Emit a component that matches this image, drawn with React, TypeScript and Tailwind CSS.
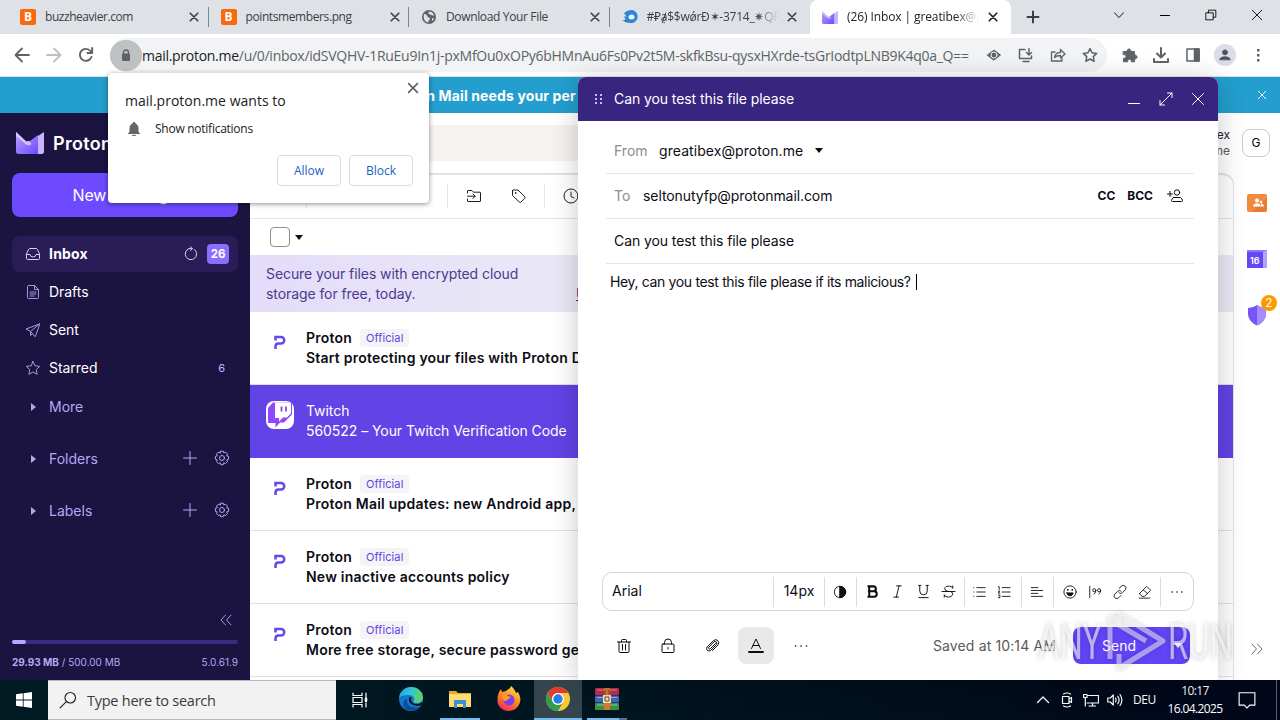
import React from 'react'
import clsx from 'clsx'

interface IconProps {
    children: React.ReactNode
    size?: number
    width?: number
    className?: string
}

// 16x16 outline icon
function Icon({ children, size = 16, width = 1, className }: IconProps) {
    return (
        <svg width={size} height={size} viewBox="0 0 16 16" fill="none" stroke="currentColor" strokeWidth={width} strokeLinecap="round" strokeLinejoin="round" className={clsx('shrink-0', className)}>
            {children}
        </svg>
    )
}

const Cross = ({ size = 16, width = 1 }: { size?: number, width?: number }) => (
    <Icon size={size} width={width}><path d="M3 3l10 10M13 3L3 13" /></Icon>
)

const Gear = () => (
    <Icon>
        <circle cx="8" cy="8" r="2.5" />
        <path d="M6.7 1.200h2.600l.5 1.700 1.700-.8 2 2-.8 1.700 1.900.5v3l-1.900.6.8 1.700-2 2-1.700-.8-.6 1.900H6.700l-.5-1.900-1.700.8-2-2 .8-1.700-1.900-.6v-3l1.900-.5-.8-1.700 2-2 1.700.8z" />
    </Icon>
)

const ProtonMail = ({ width, height }: { width: number, height: number }) => (
    <svg width={width} height={height} viewBox="0 0 28 22" preserveAspectRatio="none" className="shrink-0">
        <defs>
            <linearGradient id="pm" x1="0" y1="0" x2="1" y2="1">
                <stop offset="0" stopColor="#b9a2ff" />
                <stop offset="1" stopColor="#6d4aff" />
            </linearGradient>
        </defs>
        <path d="M0 0l10 9q2 1.700 4 0l8-6v19H2.500Q0 22 0 19.500z" fill="url(#pm)" />
        <path d="M22 4l6-4v19.500Q28 22 25.500 22H22z" fill="#c8b4ff" />
        <path d="M0 0l9 8.500q2 1.700 4 0l2.500 3.500q-3 2.500-6 0L0 4z" fill="#e0d3ff" opacity=".8" />
    </svg>
)

const Blogger = () => (
    <div className="w-4 h-4 shrink-0 rounded-[2px] bg-[#fa6a0a] text-white text-[12px] leading-4 font-bold text-center">B</div>
)

const Globe = () => (
    <svg width="16" height="16" viewBox="0 0 16 16" className="shrink-0">
        <circle cx="8" cy="8" r="7" fill="#5f6368" />
        <path d="M3 5c2 0 3 1 3.500 2.500S9 8 9 9.500 7 11 7.500 13.500C4 13 2 10 3 5zM8 2.500c2 0 4 1 5 3.500-1 1-2 .5-2.500 0S8 5.500 7.500 4.500zM11 9.500l2-.5c-.3 1.500-1 2.500-2 3z" fill="#dee1e6" />
    </svg>
)

const Swirl = () => (
    <svg width="17" height="14" viewBox="0 0 17 14" className="shrink-0">
        <path d="M0 10.500c2 0 4-.5 5.500-2.500L8 11q-1 2-3 1.500z" fill="#1d6fc4" />
        <path d="M2 3.500C4 .5 7 0 9.500 0A6.500 6.500 0 1 1 4 10.500L2 6.500h2.500q-1-1.500-2.500-3z" fill="#2f86d8" />
        <ellipse cx="9.500" cy="7" rx="3" ry="2.500" fill="#eef2f8" />
    </svg>
)

const tabs = [
    { icon: <Blogger />, title: 'buzzheavier.com', track: 'tracking-[-0.450px]' },
    { icon: <Blogger />, title: 'pointsmembers.png', track: 'tracking-[-0.400px]' },
    { icon: <Globe />, title: 'Download Your File', track: 'tracking-[-0.350px]' },
    { icon: <Swirl />, title: '#₽ạ̸$$wǿrĐ✶-3714_✷QP', track: 'tracking-[-0.250px]' },
    { icon: <ProtonMail width={16} height={13} />, title: '(26) Inbox | greatibex@proton.me', track: 'tracking-[-0.100px]' },
]

function TabStrip() {
    return (
        <div className="flex h-[34px] shrink-0 bg-[#dee1e6] pl-2 text-[12px] text-[#3c4043]">
            {tabs.map((tab, index) => {
                const active = index === 4
                return (
                    <div key={index} className={clsx('flex items-center h-[34px] shrink-0 pl-3 pr-2', active ? 'w-[201px] bg-white rounded-t-lg text-[#202124]' : 'w-[200.500px]')}>
                        <div className="flex w-[25px] shrink-0">{tab.icon}</div>
                        <div className={clsx('w-[132px] overflow-hidden whitespace-nowrap', tab.track, index > 2 && '[mask-image:linear-gradient(to_right,#000_82%,transparent)]')}>{tab.title}</div>
                        <div className="flex flex-1 justify-center pl-1"><Cross size={12} width={2.200} /></div>
                        {index < 3 && <div className="w-px h-5 -mr-2 bg-[#80868b]" />}
                    </div>
                )
            })}
            <div className="flex items-center pl-[14px]">
                <Icon width={2}><path d="M8 2.500v11M2.500 8h11" /></Icon>
            </div>
            <div className="ml-auto mr-px flex h-[30px] items-center text-black">
                <div className="w-[46px] flex justify-center"><Icon size={14}><path d="M3 5.500l5 5.500 5-5.500" /></Icon></div>
                <div className="w-[46px] flex justify-center"><div className="w-[10px] h-px bg-black" /></div>
                <div className="w-[46px] flex justify-center"><Icon size={14} className="[stroke-linejoin:miter]"><path d="M2.500 5.500h8v8h-8zM5 5.500v-3h8.500v8h-3" /></Icon></div>
                <div className="w-[45px] flex justify-center"><Icon size={14}><path d="M2.500 2.500l11 11M13.500 2.500l-11 11" /></Icon></div>
            </div>
        </div>
    )
}

function AddressBar() {
    return (
        <div className="flex items-center h-[43px] shrink-0 bg-white border-b border-[#dfe1e5] text-[#5f6368]">
            <div className="flex w-[110px] shrink-0">
                <div className="w-11 flex justify-center"><Icon width={1.800}><path d="M15 8H1.500M8 1.500L1.500 8 8 14.500" /></Icon></div>
                <div className="w-5 flex justify-center text-[#bdc1c6]"><Icon width={1.800}><path d="M1 8h13.500M8 1.500L14.500 8 8 14.500" /></Icon></div>
                <div className="w-11 flex justify-center"><Icon width={1.900}><path d="M13.500 10A6 6 0 1 1 12.500 4L14 6M14.200 1v5H9.500" /></Icon></div>
            </div>
            <div className="flex items-center w-[997px] h-[34px] rounded-full bg-[#f1f3f4]">
                <div className="flex items-center justify-center w-8 h-[31px] rounded-full bg-[#bdc1c1] shrink-0">
                    <svg width="10" height="13" viewBox="0 0 10 13"><path d="M2.500 5V3.500a2.500 2.500 0 0 1 5 0V5" fill="none" stroke="#5f6368" strokeWidth="1.300" /><rect x="1" y="4.500" width="8" height="7.500" rx="1" fill="#5f6368" /></svg>
                </div>
                <div className="w-[844px] shrink-0 whitespace-nowrap text-[14px] tracking-[-0.280px]"><span className="text-[#202124]">mail.proton.me</span>/u/0/inbox/idSVQHV-1RuEu9In1j-pxMfOu0xOPy6bHMnAu6Fs0Pv2t5M-skfkBsu-qysxHXrde-tsGrIodtpLNB9K4q0a_Q==</div>
                <div className="flex gap-4 shrink-0">
                    <Icon><path d="M1.500 8L8 3l6.500 5L8 13z" fill="currentColor" /><circle cx="8" cy="8" r="3" stroke="#f1f3f4" /></Icon>
                    <Icon width={1.500}><path d="M7 2.500H1.500v9h12V9M5 14.500h6M11 1.500v6M8.500 5.500L11 8l2.500-2.500" /></Icon>
                    <Icon width={1.300}><path d="M5 5H1.500v9H12v-3M4.500 10.500c.5-4 3-5 6-5V2.500L15 7l-4.500 4V8.500c-3 0-4.500.5-6 2z" /></Icon>
                    <Icon width={1.500}><path d="M8 1.500l2 4.300 4.700.6-3.400 3.200.8 4.700L8 12l-4.100 2.300.8-4.700L1.300 6.400 6 5.800z" /></Icon>
                </div>
            </div>
            <div className="flex items-center w-[173px] justify-between pl-[15px] pr-[14px]">
                <Icon><path d="M1.500 4.500h3.700a1.900 1.900 0 1 1 3.600 0h3.700v3.700a1.900 1.900 0 1 1 0 3.600v3H9.300a1.900 1.900 0 1 0-3.600 0H1.500v-3.600a1.900 1.900 0 1 0 0-3.600z" fill="currentColor" /></Icon>
                <Icon width={2} className="ml-px"><path d="M8 1v9M4 6.500L8 10.500l4-4M1 12v3h14v-3" /></Icon>
                <Icon width={1.500} className="ml-[2px]"><path d="M2 2h12v12H2z" /><path d="M9.500 2H14v12H9.500z" fill="currentColor" /></Icon>
                <div className="flex items-center justify-center w-[22px] h-[22px] rounded-full bg-[#dadce6] text-[#4a4f63]"><Icon size={14}><circle cx="8" cy="5" r="2.800" fill="currentColor" /><path d="M2 13c0-4 12-4 12 0z" fill="currentColor" /></Icon></div>
                <Icon width={0}><g fill="currentColor"><rect x="7" y="2" width="2.500" height="2.500" /><rect x="7" y="7" width="2.500" height="2.500" /><rect x="7" y="12" width="2.500" height="2.500" /></g></Icon>
            </div>
        </div>
    )
}

function PermissionPopup() {
    return (
        <div className="absolute left-[108px] top-[73px] w-[321px] h-[130px] z-30 flex flex-col rounded bg-white shadow-[0_1px_5px_rgba(0,0,0,0.45)] text-[#202124]">
            <div className="flex justify-between pl-[17px] pr-[9px] pt-[8px] h-[43px]">
                <div className="pt-[10px] text-[14px] leading-5 tracking-[0.020px] whitespace-nowrap">mail.proton.me wants to</div>
                <div className="text-[#5f6368]"><Cross size={14} width={1.900} /></div>
            </div>
            <div className="flex items-center h-[26px] pl-[18px] text-[12px]">
                <Icon size={16} className="text-[#666]"><path d="M8 1.500c.9 0 1.200.7 1.200 1.300C11 3.500 12 5 12 7v4l1.700 1.500H2.300L4 11V7c0-2 1-3.500 2.800-4.200C6.800 2.200 7.100 1.500 8 1.500zM6.500 14.400h3" fill="currentColor" /></Icon>
                <div className="ml-[13px] tracking-[-0.260px] whitespace-nowrap">Show notifications</div>
            </div>
            <div className="flex justify-end gap-2 pr-[16px] pt-[13px] text-[12px] text-[#1a63c4]">
                <div className="w-16 h-[31px] flex items-center justify-center rounded border border-[#dadce0]">Allow</div>
                <div className="w-16 h-[31px] flex items-center justify-center rounded border border-[#dadce0]">Block</div>
            </div>
        </div>
    )
}

const folders = [
    { name: 'Inbox', icon: <Icon><path d="M1.500 8l2-4.500q.5-1 1.500-1h6q1 0 1.500 1l2 4.500v4.500q0 1-1 1h-11q-1 0-1-1zM1.500 8.500H5q0 2.500 3 2.500t3-2.500h3.500" /></Icon> },
    { name: 'Drafts', icon: <Icon><path d="M3.500 1.500h6l4 4v8q0 1-1 1h-9q-1 0-1-1v-11q0-1 1-1zM9.500 1.500v4h4M5 8h6M5 10h6M5 12h4" /></Icon> },
    { name: 'Sent', icon: <Icon><path d="M14.500 2L1 7l4.500 2.500L10 14.500zM14.500 2l-9 7.500v4l2-1.800" /></Icon> },
    { name: 'Starred', icon: <Icon><path d="M8 1.500l2 4.300 4.700.6-3.400 3.200.8 4.700L8 12l-4.100 2.300.8-4.700L1.300 6.400 6 5.800z" /></Icon> },
]

function Sidebar() {
    return (
        <div className="w-[250px] shrink-0 flex flex-col bg-[#1b1340] text-[14px] text-white px-3">
            <div className="flex items-center h-[60px] pl-1">
                <ProtonMail width={28} height={22} />
                <span className="ml-[9px] text-[18px] font-semibold tracking-[0.300px] whitespace-nowrap">Proton Mail</span>
            </div>
            <div className="flex items-center justify-center h-11 rounded-lg bg-[#6d4aff] text-[16px] tracking-[-0.200px]">New message</div>
            <div className="flex flex-col gap-[2px] mt-[19px]">
                {folders.map((folder, index) => (
                    <div key={index} className={clsx('flex items-center h-9 rounded-lg pl-[13px] pr-[9px]', index === 0 && 'bg-[#2a1d57] font-bold')}>
                        <span className={clsx('mr-2', index === 0 ? 'text-[#d9ccff]' : 'text-[#a898e0]')}>{folder.icon}</span>
                        <span className={clsx('pb-[2px]', index === 0 ? 'tracking-[0.200px]' : 'tracking-[-0.050px]')}>{folder.name}</span>
                        {index === 0 && (
                            <div className="ml-auto flex items-center gap-2">
                                <Icon className="text-[#d9ccff]"><path d="M11.500 3.500A5.700 5.700 0 1 1 6 2.600M6 2.600h3M7.500.8l2 1.800-2 2" /></Icon>
                                <div className="w-[22px] h-5 rounded bg-[#8a6eff] text-[11.500px] leading-5 text-center">26</div>
                            </div>
                        )}
                        {index === 3 && <span className="ml-auto mr-[4px] text-[11px] text-[#c4b5fd]">6</span>}
                    </div>
                ))}
            </div>
            {['More', 'Folders', 'Labels'].map((name, index) => (
                <div key={name} className={clsx('flex items-center h-9 pl-[19px] pr-2 text-[#b8a6f3]', index === 0 ? 'mt-[3px]' : 'mt-4')}>
                    <svg width="5" height="8" viewBox="0 0 5 8"><path d="M0 0l5 4-5 4z" fill="#b8a6f3" /></svg>
                    <span className="ml-[13px] pb-[2px]">{name}</span>
                    {index > 0 && (
                        <div className="ml-auto mb-[2px] flex gap-4">
                            <Icon><path d="M8 1.500v13M1.500 8h13" /></Icon>
                            <Gear />
                        </div>
                    )}
                </div>
            ))}
            <div className="mt-auto flex justify-end pr-1 text-[#a898e0]">
                <Icon><path d="M7.500 3L3 8l4.500 5M13 3L8.500 8l4.500 5" /></Icon>
            </div>
            <div className="mt-[12px] h-1 rounded-full bg-[#3c2a80]"><div className="w-[14px] h-1 rounded-full bg-[#b9a5ff]" /></div>
            <div className="flex justify-between items-center h-9 pt-px text-[10px] text-[#b8a6f3] whitespace-nowrap">
                <span><b>29.93 MB</b> / 500.00 MB</span>
                <span>5.0.61.9</span>
            </div>
        </div>
    )
}

const mails = [
    { from: 'Proton', subject: 'Start protecting your files with Proton Drive' },
    { from: 'Twitch', subject: '560522 – Your Twitch Verification Code' },
    { from: 'Proton', subject: 'Proton Mail updates: new Android app, and more' },
    { from: 'Proton', subject: 'New inactive accounts policy' },
    { from: 'Proton', subject: 'More free storage, secure password generator' },
]

const ProtonP = () => (
    <svg width="12" height="15" viewBox="0 0 12 15" className="mt-[1px]">
        <path d="M1.500 5.500V2H7a3.200 3.200 0 0 1 0 6.500H4.500q-3 0-3 3V14" fill="none" stroke="#6746ee" strokeWidth="2.500" />
    </svg>
)

const TwitchLogo = () => (
    <svg width="28" height="28" viewBox="0 0 28 28" className="shrink-0">
        <rect width="28" height="28" rx="8" fill="#fff" />
        <path d="M7 1.500h19v12l-8 8h-4l-4.500 5v-4.500H2V7z" fill="#9146ff" />
        <path d="M9 1.500h16v11l-4 4h-4l-4 4V17H9z" fill="#fff" />
        <path d="M15.500 5.500v5M20 5.500v5" stroke="#7b42e0" strokeWidth="1.700" />
    </svg>
)

function MailList() {
    return (
        <div className="flex-1 min-w-0 flex flex-col bg-white">
            <div className="flex h-[60px] shrink-0 items-center pl-3">
                <div className="w-[640px] h-9 rounded-lg bg-[#f5f2ef]" />
                <div className="ml-auto pr-1 text-right text-[12px] leading-4 text-[#202124]">
                    <div>greatibex</div>
                    <div className="text-[#5c5958]">greatibex@proton.me</div>
                </div>
            </div>
            <div className="flex-1 min-h-0 flex flex-col overflow-hidden border-t-2 border-r border-[#e2e1e5] rounded-tr-xl">
                <div className="flex items-center h-[44px] shrink-0 border-b border-[#e5e4e8] text-[#1c1b24] pl-[56px] pb-px">
                    <div className="w-px h-6 bg-[#e5e4e8]" />
                    <div className="w-px h-6 ml-[140px] bg-[#e5e4e8]" />
                    <Icon className="ml-[18px]"><path d="M1.500 5V3q0-.5.500-.5h4L7.500 4.200H14q.5 0 .5.500V13q0 .5-.5.500H2q-.5 0-.5-.500v-2M1.500 8.200H9M7 6l2.200 2.200L7 10.500" /></Icon>
                    <Icon className="ml-[29px]"><path d="M1.500 2.500v5L8.500 14.200q.7.600 1.400 0l4-4q.6-.7 0-1.400L7 2H2q-.5 0-.5.500z" /><circle cx="4.500" cy="5" r=".4" /></Icon>
                    <div className="w-px h-6 ml-[17px] bg-[#e5e4e8]" />
                    <Icon className="ml-[18px]"><circle cx="8" cy="8" r="7" /><path d="M8 4v4.500l3 1.500" /></Icon>
                </div>
                <div className="flex items-center h-9 shrink-0 pl-[20px]">
                    <div className="w-5 h-5 rounded border border-[#8f8d8a]" />
                    <svg width="8" height="5" viewBox="0 0 8 5" className="ml-[5px]"><path d="M0 0h8L4 5z" fill="#0c0c14" /></svg>
                </div>
                <div className="flex items-center h-[57px] shrink-0 bg-linear-to-r from-[#e4dcf9] to-[#eae9f6] to-[330px] pl-4 text-[14px] leading-5 text-[#4b3a8f]">
                    <div className="w-[272px] tracking-[-0.080px]">Secure your files with encrypted cloud storage for free, today.</div>
                    <div className="ml-[38px] mt-5 underline text-[#372580]">Upgrade</div>
                </div>
                {mails.map((mail, index) => {
                    const selected = index === 1
                    return (
                        <div key={index} className={clsx('flex h-[73px] shrink-0 border-b pl-4 text-[14px] leading-5', selected ? 'bg-[#6243e6] border-[#6243e6] text-white tracking-[-0.060px]' : 'border-[#e0e0e4] text-[#0c0c14] font-semibold tracking-[0.220px]')}>
                            <div className="flex justify-center w-7 mr-3 pt-[16px]">
                                {selected ? <TwitchLogo /> : <div className="pt-[6px]"><ProtonP /></div>}
                            </div>
                            <div className="pt-4 whitespace-nowrap">
                                <div className="flex items-center">
                                    {mail.from}
                                    {!selected && <span className="ml-[8px] px-[6px] h-[18px] leading-[18px] rounded bg-[#f4f3f5] text-[11px] font-normal text-[#6243e6] tracking-[0.100px]">Official</span>}
                                </div>
                                <div>{mail.subject}</div>
                            </div>
                        </div>
                    )
                })}
            </div>
        </div>
    )
}

function RightRail() {
    return (
        <div className="w-[46px] shrink-0 flex flex-col items-center bg-white">
            <div className="mt-4 mr-[2px] w-7 h-7 rounded-lg border border-[#c9c8cc] text-[12px] leading-[26px] text-center text-black">G</div>
            <svg width="20" height="18" viewBox="0 0 20 18" className="mt-[37px]">
                <rect width="20" height="18" rx="2" fill="#f08a3c" />
                <path d="M20 4v12a2 2 0 0 1-2 2H5z" fill="#e96d2d" opacity=".6" />
                <g fill="#fff"><circle cx="10" cy="6.500" r="2" /><path d="M6 12.500c0-4.500 8-4.500 8 0z" /><circle cx="14" cy="8" r="1.300" /><path d="M14 12.500h3c0-2-1.500-3-3-3z" /></g>
            </svg>
            <div className="mt-[38px] w-5 h-[18px] flex items-end bg-[#6548f5] border-t-2 border-r-4 border-[#b8a0ff] border-t-[#8f74ff] text-white text-[9px] leading-[14px] font-semibold pl-[3px]">16</div>
            <div className="relative mt-[36px]">
                <svg width="20" height="22" viewBox="0 0 20 22">
                    <path d="M10 1q4 3 9 3v7q-1 7-9 10.500Q2 18 1 11V4q5 0 9-3z" fill="#7556f5" />
                    <path d="M10 1q4 3 9 3v7q-1 7-9 10.500z" fill="#a58bff" />
                </svg>
                <div className="absolute -top-[9px] left-[14px] w-4 h-4 rounded-full bg-[#ff9900] text-white text-[12px] leading-4 text-center">2</div>
            </div>
            <div className="mt-auto mb-[23px] text-[#706d6b]"><Icon><path d="M3 3l4.500 5L3 13M8.500 3L13 8l-4.500 5" /></Icon></div>
        </div>
    )
}

const Divider = () => <div className="w-px h-[30px] shrink-0 bg-[#dcdbe0]" />
const Cell = ({ children }: { children: React.ReactNode }) => <div className="flex-1 flex justify-center">{children}</div>

function FormatBar() {
    return (
        <div className="mx-6 flex items-center h-[39px] shrink-0 rounded-[10px] border border-[#d6d5da]">
            <div className="w-[170px] pl-[9px] pb-[2px]">Arial</div>
            <Divider />
            <div className="w-[50px] text-center pb-[2px]">14px</div>
            <Divider />
            <div className="w-[31px] flex justify-center pr-px"><Icon size={14}><circle cx="8" cy="8" r="6.500" /><path d="M8 1.500a6.500 6.500 0 0 1 0 13z" fill="currentColor" /></Icon></div>
            <Divider />
            <div className="w-[107px] flex px-[3px]">
                <Cell><Icon width={2.200} size={15}><path d="M3.500 2.500H9a2.600 2.600 0 0 1 0 5.300H4M4 7.800h5.700a2.800 2.800 0 0 1 0 5.700H3.500M4.500 2.500v11" /></Icon></Cell>
                <Cell><Icon size={15}><path d="M7 2h5M4 14h5M9.700 2l-3 12" /></Icon></Cell>
                <Cell><Icon size={15}><path d="M4 1.500v6a4 4 0 0 0 8 0v-6M2.800 1.500h2.400M10.800 1.500h2.400M3 14.500h10" /></Icon></Cell>
                <Cell><Icon size={15}><path d="M12.500 4.500V2M12.500 4C11 1.500 4 1.500 4 5q0 2.500 4 3h2q3 1 2.500 3c-1 4-8 3.500-9 .5v2.500M1 8h14" /></Icon></Cell>
            </div>
            <Divider />
            <div className="w-[56px] flex pl-[2px] pr-[5px]">
                <Cell><Icon size={14}><path d="M5.500 3H15M5.500 8H15M5.500 13H15M2 3h.1M2 8h.1M2 13h.1" /></Icon></Cell>
                <Cell><Icon size={14}><path d="M6 3h9M6 8h9M6 13h9M1.500 2h1v3M1.500 7h1.800L1.500 9.300h1.800M1.500 11.500h1.800v3H1.500" /></Icon></Cell>
            </div>
            <Divider />
            <div className="w-[31px] flex justify-center pr-[2px]"><Icon size={14}><path d="M1.500 3H9M1.500 6.300h13M1.500 9.600H9M1.500 13h13" /></Icon></div>
            <Divider />
            <div className="w-[106px] flex px-[3px]">
                <Cell><Icon size={14}><circle cx="8" cy="8" r="7" /><path d="M4.500 9h7c0 4.500-7 4.500-7 0z" fill="currentColor" /><path d="M5.500 5.500h.1M10.500 5.500h.1" strokeWidth="2" /></Icon></Cell>
                <Cell><Icon size={14}><path d="M2 1.500v13M9 6a1.800 1.800 0 1 0-3.600 0A1.800 1.800 0 0 0 9 6q0 3-2 4.500M14.500 6a1.800 1.800 0 1 0-3.600 0 1.800 1.800 0 0 0 3.600 0q0 3-2 4.500" /></Icon></Cell>
                <Cell><Icon size={14}><path d="M7 4l2.500-2.500a2.800 2.800 0 0 1 4.500 4L11 8.500a2.800 2.800 0 0 1-4.300.3M9 12l-2.500 2.500a2.800 2.800 0 0 1-4.500-4L5 7.500a2.800 2.800 0 0 1 4.300-.3" /></Icon></Cell>
                <Cell><Icon size={14}><path d="M2 9.500L9.500 2q.5-.5 1 0L14 5.500q.5.500 0 1L7.500 13H5L2 10.500q-.5-.5 0-1zM6 5.500l5 4.500M1.500 15h12" /></Icon></Cell>
            </div>
            <Divider />
            <div className="flex-1 flex justify-center"><Icon size={14} width={1.700}><path d="M2.500 8h.1M8 8h.1M13.500 8h.1" /></Icon></div>
        </div>
    )
}

function Composer() {
    return (
        <div className="absolute left-[578px] top-[77px] w-[640px] h-[603px] z-20 flex flex-col rounded-t-lg bg-white text-[14px] text-[#0c0c14] shadow-[0_4px_28px_rgba(0,0,0,0.220)]">
            <div className="flex items-center h-11 shrink-0 rounded-t-lg bg-[#372580] text-white pl-[17px] pr-3">
                <svg width="8" height="12" viewBox="0 0 8 12" fill="#c9bdf5"><path d="M0 1h2v2H0zM5 1h2v2H5zM0 5h2v2H0zM5 5h2v2H5zM0 9h2v2H0zM5 9h2v2H5z" /></svg>
                <span className="ml-[11px] pb-[2px] tracking-[-0.080px]">Can you test this file please</span>
                <div className="ml-auto flex gap-4">
                    <Icon><path d="M2.500 12.500h11" /></Icon>
                    <Icon><path d="M2 14L14 2M9.500 2H14v4.500M2 9.500V14h4.500" /></Icon>
                    <Icon><path d="M2.500 2.500l11 11M13.500 2.500l-11 11" /></Icon>
                </div>
            </div>
            <div className="ml-7 mr-6 shrink-0">
                <div className="flex items-center h-[53px] pt-[6px] border-b border-[#e5e4e8] pl-2">
                    <span className="w-[45px] text-[#8f8d8a]">From</span>
                    <span className="tracking-[0.070px]">greatibex@proton.me</span>
                    <svg width="8" height="5" viewBox="0 0 8 5" className="ml-3"><path d="M0 0h8L4 5z" fill="#0c0c14" /></svg>
                </div>
                <div className="flex items-center h-[45px] border-b border-[#e5e4e8] pl-2">
                    <span className="w-[29px] pb-[2px] text-[#8f8d8a]">To</span>
                    <span className="pb-[2px] tracking-[-0.080px]">seltonutyfp@protonmail.com</span>
                    <div className="ml-auto flex items-center gap-3 pr-[11px] text-[12px] font-bold">
                        <span>CC</span>
                        <span>BCC</span>
                        <Icon className="ml-[2px]"><circle cx="10" cy="4.500" r="2.700" /><path d="M6.500 9.500h7q2 1.500 2 3 0 1-1 1h-9q-1 0-1-1 0-1.500 2-3zM.5 6h5M3 3.500v5" /></Icon>
                    </div>
                </div>
                <div className="flex items-center h-[45px] pb-[2px] border-b border-[#e5e4e8] pl-2 tracking-[-0.080px]">Can you test this file please</div>
            </div>
            <div className="flex-1 flex items-start pl-8 pt-[8px] leading-[20px]">
                <span className="tracking-[-0.350px] whitespace-nowrap">Hey, can you test this file please if its malicious?</span>
                <div className="ml-[5px] mt-[2px] w-px h-4 bg-black" />
            </div>
            <FormatBar />
            <div className="flex items-center h-[69px] pl-[38px] pr-7 shrink-0">
                <Icon><path d="M1.500 4h13M5.500 4V2.500q0-1 1-1h3q1 0 1 1V4M3 4v9.500q0 1 1 1h8q1 0 1-1V4M6.500 6.500V12M9.500 6.500V12" /></Icon>
                <Icon className="ml-7"><path d="M3 6h10q1 0 1 1v6.500q0 1-1 1H3q-1 0-1-1V7q0-1 1-1zM4.500 6V4.500a3.500 3.500 0 0 1 7 0V6M8 9.500V11" /></Icon>
                <Icon className="ml-7"><path d="M11.500 5.500L6.300 10.700q-.9.700-1.500 0t0-1.500L9.800 4q1.400-1.200 2.500 0t0 2.600L6.800 12.300q-2 1.500-3.500 0t0-3.500L9.500 2.600q2.500-1.900 4.300 0t.2 4.300L8.500 12.500" /></Icon>
                <div className="ml-[18px] w-9 h-[37px] flex items-center justify-center rounded-lg bg-[#e9e9e9]"><Icon><path d="M3.500 10.500L8 1l4.500 9.500M5 7.500h6" /><path d="M1 14h14" strokeWidth="1.800" /></Icon></div>
                <Icon className="ml-[19px]" width={1.600}><path d="M2.500 8h.1M8 8h.1M13.500 8h.1" /></Icon>
                <span className="ml-auto text-[#5c5958] tracking-[0.130px]">Saved at 10:14 AM</span>
                <div className="ml-[17px] w-[117px] h-[37px] rounded-lg bg-[#6243f5] text-white flex items-center">
                    <span className="w-[92px] text-center">Send</span>
                    <svg width="8" height="5" viewBox="0 0 8 5" className="ml-[9px]"><path d="M0 0h8L4 5z" fill="#fff" /></svg>
                </div>
            </div>
        </div>
    )
}

function Watermark() {
    return (
        <svg width="204" height="72" viewBox="0 0 204 72" className="absolute left-[1034px] top-[606px] z-40 [filter:drop-shadow(0_0_2px_rgba(0,0,0,0.350))]" fill="#fff" fillOpacity=".6">
            <text x="4" y="53" fontSize="50" fontFamily="Roboto, sans-serif" textLength="64" lengthAdjust="spacingAndGlyphs">ANY</text>
            <path d="M84 14L78 11q-2 0-2 3v39M85 19V8l44 27-44 27V48M85 19l27 16" fill="none" stroke="#fff" strokeOpacity=".5" strokeWidth="5" strokeLinejoin="round" />
            <text x="134" y="53" fontSize="50" fontFamily="Roboto, sans-serif" textLength="65" lengthAdjust="spacingAndGlyphs">RUN</text>
        </svg>
    )
}

const Edge = () => (
    <svg width="26" height="26" viewBox="0 0 26 26">
        <defs><linearGradient id="edge" x1="0" y1="0" x2="1" y2=".3"><stop offset="0" stopColor="#1a9be0" /><stop offset=".5" stopColor="#30c6d8" /><stop offset="1" stopColor="#5fd06a" /></linearGradient></defs>
        <circle cx="13" cy="13" r="12" fill="#1377cc" />
        <path d="M1 12C2 5 7 1 13 1c7 0 12 5 12 10 0 4-3 6-6 6-4 0-4-1.500-3-3 1-2-1-5-5-5-5 0-9 1-10 3z" fill="url(#edge)" />
        <path d="M9 13c-1 6 4 10 12 8-4 5-12 5-15 0-2-5 1-8 3-8z" fill="#0c4f99" />
        <path d="M12.500 11c-2 5 2 8 7 8 2 0 4-1 5-2" fill="none" stroke="#04182a" strokeWidth="2" />
    </svg>
)

const Explorer = () => (
    <svg width="24" height="24" viewBox="0 0 24 24">
        <path d="M1 4h7l2 2h13v14H1z" fill="#e8a92c" />
        <path d="M1 7h22v13H1z" fill="#fddc72" />
        <path d="M6 21v-7q0-1 1-1h10q1 0 1 1v7h-3v-4H9v4z" fill="#3c8fd0" />
    </svg>
)

const Firefox = () => (
    <svg width="26" height="26" viewBox="0 0 26 26">
        <defs><linearGradient id="ff" x1=".8" y1="0" x2=".3" y2="1"><stop offset="0" stopColor="#ffe14a" /><stop offset=".5" stopColor="#ff8a1e" /><stop offset="1" stopColor="#f5295a" /></linearGradient></defs>
        <path d="M3 6l2-3 1 3 4-1c1-1 4-2 5-5 3 2 4 5 5 7l2-1c2 4 3 7 2 10-1 5-6 9-11 9-7 0-12-5-11.500-11Q1.500 9 3 6z" fill="url(#ff)" />
        <circle cx="13" cy="14" r="5.500" fill="#7b3ff2" />
        <path d="M5 9c3-1 5-1 7 1l3 1c-1 2-4 2-5 4-2 0-4-2-5-6z" fill="#ff9a25" />
    </svg>
)

const Chrome = () => (
    <svg width="24" height="24" viewBox="0 0 24 24">
        <circle cx="12" cy="12" r="12" fill="#fcc934" />
        <path d="M1.600 6A12 12 0 0 1 22.400 6H12a6 6 0 0 0-5.200 9z" fill="#e33b2e" />
        <path d="M1.600 6A12 12 0 0 0 12 24l5.200-9a6 6 0 0 1-10.400 0z" fill="#2da04f" />
        <circle cx="12" cy="12" r="6" fill="#fff" />
        <circle cx="12" cy="12" r="4.700" fill="#2b7de9" />
    </svg>
)

const WinRar = () => (
    <svg width="26" height="24" viewBox="0 0 26 24">
        <rect x="1" y="1" width="24" height="7" rx="1" fill="#c22e48" />
        <rect x="1" y="8.500" width="24" height="7" rx="1" fill="#4268bd" />
        <rect x="1" y="16" width="24" height="7" rx="1" fill="#3e9145" />
        <path d="M3 3h20M3 10.500h20M3 18h20" stroke="#fff" strokeOpacity=".45" />
        <path d="M10 1h6v22h-6z" fill="#d9782a" />
        <path d="M9 8h8v8H9z" fill="#f3e5c5" />
        <path d="M11 3v5M15 3v5M11 10h4v4h-4z" stroke="#77451c" fill="none" />
    </svg>
)

const apps = [
    { icon: <Edge />, style: '', bar: '' },
    { icon: <Explorer />, style: '', bar: 'w-10 bg-[#76b9ed]' },
    { icon: <Firefox />, style: '', bar: '' },
    { icon: <Chrome />, style: 'bg-[#35454e]', bar: 'w-12 bg-[#76b9ed]' },
    { icon: <WinRar />, style: '', bar: 'w-10 bg-linear-to-r from-[#76b9ed] from-80% to-[#4c7594] to-80%' },
]

function Taskbar() {
    return (
        <div className="flex h-10 shrink-0 bg-linear-to-r from-[#001a22] via-[#001520] to-[#02061a] text-white">
            <div className="w-12 flex items-center justify-center">
                <svg width="16" height="16" viewBox="0 0 16 16" fill="#fff"><path d="M0 2.300l6.800-1v6.300H0zM7.600 1.200L16 0v7.600H7.600zM0 8.400h6.800v6.300L0 13.700zM7.600 8.400H16V16l-8.400-1.200z" /></svg>
            </div>
            <div className="w-[288px] flex items-center bg-[#f2f2f2] border-y border-[#b8b8b8] pl-[11px] text-[#1f1f1f]">
                <Icon size={18}><circle cx="10" cy="6" r="4.700" /><path d="M6.500 9.500L1 15" /></Icon>
                <span className="ml-[10px] pt-px text-[14.500px] tracking-[-0.250px] text-[#3a3a3a]">Type here to search</span>
            </div>
            <div className="w-[51px] flex items-center justify-center pr-[4px]">
                <Icon className="[stroke-linejoin:miter]" width={1.200}><path d="M1 1v2.500h9V1M1 15v-2.500h9V15M1 5.500h9v5H1zM14 1v4M14 11v4" /><path d="M14 6.500v2.500" strokeWidth="2.500" /></Icon>
            </div>
            {apps.map((app, index) => (
                <div key={index} className={clsx('w-12 mr-px flex flex-col items-center justify-end', app.style)}>
                    <div className="h-[38px] flex items-center">{app.icon}</div>
                    <div className={clsx('h-[2px]', app.bar)} />
                </div>
            ))}
            <div className="ml-auto flex items-center text-[12px]">
                <div className="flex gap-2">
                    <Icon width={1.300}><path d="M2.500 10.500L8 5l5.500 5.500" /></Icon>
                    <Icon width={1.200}><path d="M3.500 4.500h6.500v7H3.500zM10 7l2.500-1.500v5L10 9M4.500 2q3.500-2 7 0M4.500 14q3.500 2 7 0" /></Icon>
                    <Icon width={1.200}><path d="M4 3.500h11.500v7.500H4M9.500 11v3M6 14h6.500M.6 2.500h3.400v3H.6zM2.300 5.500V14" /></Icon>
                    <Icon width={1.200}><path d="M.8 6h2.500l3-3v10l-3-3H.8zM8.500 6q1.300 2 0 4M10.800 4.300q2.600 3.700 0 7.400M13 2.500q3.800 5.500 0 11" /></Icon>
                </div>
                <span className="ml-[10px] w-[24px] tracking-[-0.450px]">DEU</span>
                <div className="ml-[6px] w-[64px] text-center leading-[18px] tracking-[-0.600px]">
                    <div>10:17</div>
                    <div>16.04.2025</div>
                </div>
                <Icon size={18} className="ml-[11px] mr-[20px] [stroke-linejoin:miter]"><path d="M1 1.500h14v11H10.500L8 15l-2.500-2.500H1z" /></Icon>
                <div className="w-px h-10 mr-[3px] bg-[#59606b]" />
            </div>
        </div>
    )
}

export default function App() {
    return (
        <div className="relative w-[1280px] h-[720px] overflow-hidden flex flex-col bg-white font-['Open_Sans','Noto_Sans',sans-serif]">
            <TabStrip />
            <AddressBar />
            <div className="flex-1 min-h-0 flex flex-col font-['Inter',sans-serif]">
                <div className="flex items-center h-9 shrink-0 bg-[#239ece] text-white text-[14px] font-bold pl-[389px] pr-3">
                    <span className="whitespace-nowrap tracking-[0.130px]">Proton Mail needs your per</span>
                    <div className="ml-auto"><Cross size={12} width={1.300} /></div>
                </div>
                <div className="flex-1 min-h-0 flex">
                    <Sidebar />
                    <MailList />
                    <RightRail />
                </div>
            </div>
            <Taskbar />
            <PermissionPopup />
            <div className="font-['Inter',sans-serif]">
                <Composer />
            </div>
            <Watermark />
        </div>
    )
}
